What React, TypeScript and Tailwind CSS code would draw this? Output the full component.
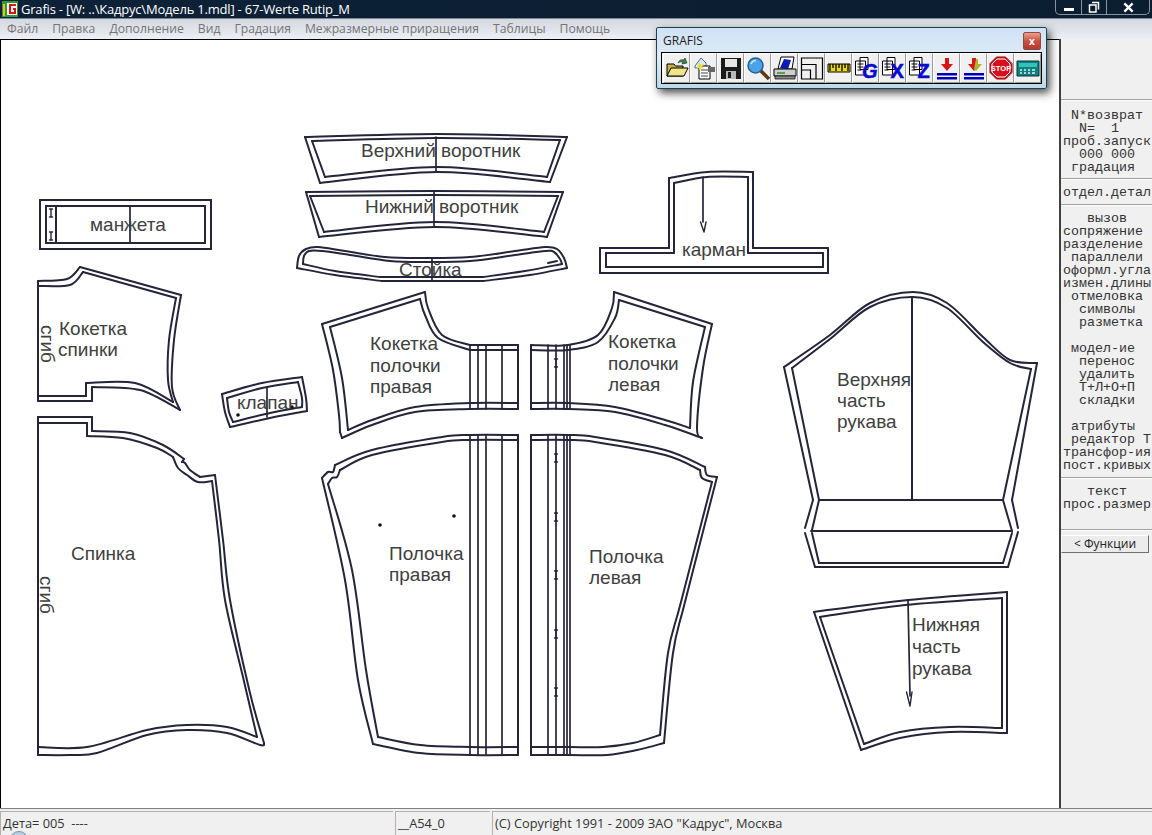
import type { ReactNode } from 'react';

// each piece is a list of smooth strokes: "x,y x,y x,y" in page coordinates
const heavy: string[] = [
  // верхний воротник
  '305,137 437,134 567,137', '567,137 550,182', '550,182 437,172 320,183', '320,183 305,137',
  '312,141 437,138 560,140', '560,140 547,177', '547,177 437,167 325,177', '325,177 312,141',
  // нижний воротник
  '306,192 435,191 563,192', '563,192 547,237', '547,237 435,227 319,237', '319,237 306,192',
  '310,196 435,195 558,196', '558,196 544,232', '544,232 435,222 324,232', '324,232 310,196',
  // стойка
  '297,268 299,256 306,249 318,247 345,251 385,257 423,258 470,257 515,251 545,247 557,249 564,258 567,268',
  '567,268 530,275 483,281', '483,281 382,281', '382,281 335,275 297,268',
  '303,264 304,256 309,251 322,251 350,255 390,261 425,262 470,261 515,255 545,251 554,252 560,259 562,264',
  '562,264 525,271 483,277', '483,277 380,277', '380,277 335,271 303,264',
  // манжета
  '40,200 211,200', '211,200 211,249', '211,249 40,249', '40,249 40,200',
  '46,206 205,206', '205,206 205,243', '205,243 46,243', '46,243 46,206',
  '56,206 56,243',
  // кокетка спинки
  '38,281 38,401',
  '38,281 67,279 80,267', '80,267 181,295', '181,295 174,340 172,387 180,410', '180,410 140,390 92,387',
  '92,387 92,401', '92,401 38,401',
  '38,286 70,285 83,272', '83,272 176,298', '176,298 169,340 168,380 173,402', '173,402 135,383 86,383',
  '86,383 86,396', '86,396 38,396',
  // клапан
  '222,394 262,383 302,377', '302,377 306,398 307,411', '307,411 270,418 230,427', '230,427 225,412 222,394',
  '227,398 262,388 298,382', '298,382 302,398 302,407', '302,407 270,413 233,422', '233,422 229,412 227,398',
  // спинка
  '38,417 38,755', '38,417 92,417', '92,417 92,431', '92,431 130,433 163,445 184,459', '184,459 182,462',
  '182,462 185,463 190,470 200,477', '200,477 215,475', '215,475 223,540 230,600 250,693 264,743', '264,743 260,745 227,733 187,730 147,735 97,753 70,755 38,755',
  '38,423 87,423', '87,423 87,436', '87,436 123,438 157,448 173,457', '173,457 178,468 187,475 198,482 212,481',
  '212,481 219,540 225,600 243,677 257,737', '257,737 227,727 187,725 147,730 87,747 38,747',
  // кокетка полочки правая
  '322,324 425,292', '425,292 428,308 442,335 470,345', '470,345 518,345', '518,345 518,409', '518,409 470,409 415,412 372,425 342,438',
  '342,438 340,432', '322,324 333,370 339,415 340,432',
  '330,327 420,299', '420,299 425,315 438,338 470,350', '470,350 518,350', '518,403 470,403 415,407 372,420 348,430', '348,430 342,378 330,327',
  // кокетка полочки левая
  '531,345 568,345 598,335 612,308 614,292', '614,292 712,324', '712,324 703,368 697,428 702,438', '702,438 665,425 615,412 568,409 531,409', '531,409 531,345',
  '531,350 568,350 598,342 615,318 619,300', '619,300 705,327', '705,327 693,382 690,428', '690,428 665,420 615,407 568,403 531,403',
  // полочка правая
  '518,435 470,435 442,437 372,450 335,465', '335,465 333,472 328,472 322,478', '322,478 345,580 358,680 373,744', '373,744 420,753 470,755 518,755', '518,755 518,435',
  '518,440 470,440 442,442 372,455 340,470', '340,470 337,477 332,478 328,484', '328,484 352,570 366,670 378,737', '378,737 420,745 470,747 518,747',
  // полочка левая
  '531,435 568,435 595,437 665,450 705,467', '705,467 707,475 717,477', '717,477 685,602 673,653 664,743', '664,743 637,750 607,755 569,755 531,755', '531,755 531,435',
  '531,440 568,440 595,442 665,455 700,470', '700,470 702,478 712,482', '712,482 681,602 668,653 660,735', '660,735 633,743 603,747 569,747 531,747',
  // верхняя часть рукава
  '784,367 830,335 870,303 913,292 947,303 983,337 1010,360 1037,363', '1037,363 1012,500', '1012,500 1018,528', '1018,532 1008,567', '1008,567 815,567',
  '815,567 805,533', '805,528 813,500', '813,500 784,367',
  '792,368 830,339 870,307 913,297 947,308 983,342 1010,363 1031,369', '1031,369 1003,500', '1003,500 819,500', '819,500 792,368',
  '819,500 812,530', '1003,500 1012,531', '811,531 1012,531', '812,533 819,563', '819,563 1003,563', '1003,563 1012,533', '912,297 912,500',
  // нижняя часть рукава
  '814,612 908,600 1007,592', '1007,592 1007,733', '1007,733 950,732 900,738 861,750', '861,750 814,612',
  '820,617 905,605 1002,598', '1002,598 1002,728', '1002,728 950,727 900,732 864,744', '864,744 820,617',
  // карман
  '669,178 707,172 753,172', '753,172 753,248', '753,248 828,248', '828,248 828,273', '828,273 600,273', '600,273 600,248', '600,248 669,248', '669,248 669,178',
  '674,183 707,177 748,177', '748,177 748,253', '748,253 823,253', '823,253 823,267', '823,267 606,267', '606,267 606,253', '606,253 674,253', '674,253 674,183',
];

const thin: string[] = [
  '436,137 436,172', '434,192 434,227', '432,258 432,281', '130,206 130,243', '267,387 267,417',
  '703,177 703,222', '908,600 910,696',
  ...[470, 478, 486, 502].flatMap((x) => [`${x},345 ${x},409`, `${x},435 ${x},755`]),
  ...[548, 556, 564, 567, 570].flatMap((x) => [`${x},345 ${x},409`, `${x},435 ${x},755`]),
];

const bars: [number, number][] = [[51, 213], [51, 236], [556, 363], [556, 458], [556, 517], [556, 575], [556, 634], [556, 692]];
const dots: [number, number][] = [[238, 415], [292, 407], [380, 525], [454, 516]];

const labels: [string, number, number][] = [
  ['Верхний воротник', 361, 157], ['Нижний воротник', 365, 213], ['Стойка', 399, 276], ['манжета', 90, 231],
  ['карман', 682, 256], ['Кокетка', 59, 335], ['спинки', 58, 356], ['клапан', 237, 409],
  ['Кокетка', 370, 350], ['полочки', 370, 372], ['правая', 370, 393],
  ['Кокетка', 608, 348], ['полочки', 608, 370], ['левая', 608, 391],
  ['Спинка', 71, 560], ['Полочка', 389, 560], ['правая', 389, 581], ['Полочка', 589, 563], ['левая', 589, 584],
  ['Верхняя', 837, 386], ['часть', 837, 407], ['рукава', 837, 428],
  ['Нижняя', 912, 631], ['часть', 912, 653], ['рукава', 912, 675],
];

const menu = ['Файл', 'Правка', 'Дополнение', 'Вид', 'Градация', 'Межразмерные приращения', 'Таблицы', 'Помощь'];

function smooth(line: string) {
  const p = line.split(' ').map((s) => s.split(',').map(Number));
  let d = `M${p[0][0]} ${p[0][1]}`;
  for (let i = 0; i < p.length - 1; i++) {
    const a = p[Math.max(i - 1, 0)];
    const b = p[i];
    const c = p[i + 1];
    const e = p[Math.min(i + 2, p.length - 1)];
    d += `C${b[0] + (c[0] - a[0]) / 6} ${b[1] + (c[1] - a[1]) / 6} ${c[0] - (e[0] - b[0]) / 6} ${c[1] - (e[1] - b[1]) / 6} ${c[0]} ${c[1]}`;
  }
  return d;
}

function PatternSheet() {
  return (
    <svg viewBox="1 40 1058 768" className="block h-full w-full font-['Liberation_Sans',sans-serif]">
      <g fill="none" stroke="#25253a" strokeLinecap="round" strokeLinejoin="round">
        {heavy.map((l, i) => <path key={i} d={smooth(l)} strokeWidth={2} />)}
        {thin.map((l, i) => <path key={i} d={smooth(l)} strokeWidth={1.7} />)}
        {bars.map(([x, y], i) => <path key={i} d={`M${x - 1.5} ${y - 4}h3M${x} ${y - 4}v8M${x - 1.5} ${y + 4}h3`} strokeWidth={1.4} />)}
        <path d="M700.5 222L704 232L706 222M906.5 692L910 706L912 692" strokeWidth={1.4} />
        <path d="M548 263L557 261" strokeWidth={2} />
      </g>
      {dots.map(([x, y], i) => <circle key={i} cx={x} cy={y} r={1.8} fill="#111" />)}
      <g fontSize={19} fill="#404040">
        {labels.map(([t, x, y], i) => <text key={i} x={x} y={y}>{t}</text>)}
        <text transform="translate(41 325) rotate(90)">сгиб</text>
        <text transform="translate(40 576) rotate(90)">сгиб</text>
      </g>
    </svg>
  );
}

function Docs() {
  return (
    <g fill="#fff" stroke="#000" strokeWidth={1}>
      <path d="M6 1.500h8v12H6zM1.500 5h10v14h-10z" />
      <path d="M3.500 8h6M3.500 11h6M3.500 14h4" fill="none" />
    </g>
  );
}

function BlueBars() {
  return <path d="M2 17h20v2.500H2zM2 21h20v2.500H2z" fill="#0000b8" />;
}

const icons: ReactNode[] = [
  <g key="open">
    <path d="M2 8h7l1.500 2H18v10H2z" fill="#c9b24a" stroke="#000" />
    <path d="M2 20l4-8h17l-4 8z" fill="#f1e58a" stroke="#000" />
    <path d="M13 7c1-3 4-4 6-3l1-2 2 5-5 1 1-2c-2-.5-4 0-5 1z" fill="#2f8f3a" stroke="#000" strokeWidth={0.5} />
  </g>,
  <g key="doc">
    <path d="M3 10L9 2l5 5v5H3z" fill="#dfe9f5" stroke="#3a6ea5" />
    <path d="M7 10h11v13H7z" fill="#fff" stroke="#000" />
    <path d="M9 14h7M9 17h7M9 20h7" stroke="#444" />
    <path d="M16 11h7v5h-7z" fill="#666" />
    <path d="M7 6l2 3 3-1-2 3 2 2-3-1-1 3-1-3-3 1 2-3z" fill="#e8d93a" />
  </g>,
  <g key="save">
    <path d="M2 2h20v21H2z" fill="#1b1b1b" />
    <path d="M6 3h12v8H6z" fill="#e6e6e6" />
    <path d="M7 15h10v8H7z" fill="#b9b9b9" />
    <path d="M9 16h3v6H9z" fill="#1b1b1b" />
  </g>,
  <g key="find">
    <path d="M14 14l9 9" stroke="#5a3a12" strokeWidth={3.500} />
    <circle cx={9.500} cy={9.500} r={7.500} fill="#4aa3e8" stroke="#27628f" strokeWidth={1.500} />
    <path d="M5 8c1-2.500 3-3.500 5-3.500" stroke="#cfeaff" fill="none" strokeWidth={1.500} />
  </g>,
  <g key="print">
    <path d="M8 1h13l-2 12H5z" fill="#fff" stroke="#000" />
    <path d="M11 3l7 1-3 9-8-1z" fill="#0b1bb5" />
    <path d="M1 13h22v7H1z" fill="#cfcfcf" stroke="#000" />
    <path d="M2 20h20v3H2z" fill="#8a8a8a" stroke="#000" strokeWidth={0.7} />
    <path d="M4 17h8" stroke="#2f8f3a" strokeWidth={1.500} />
  </g>,
  <g key="frames" fill="none" stroke="#000" strokeWidth={1.200}>
    <path d="M1.500 2h21v21h-21z" />
    <path d="M1.500 8.500h14.500V23M1.500 14h9v9" />
  </g>,
  <g key="ruler">
    <path d="M1 8h22v8H1z" fill="#e8d81a" stroke="#000" />
    <path d="M3 8v7M6 8v4M9 8v7M12 8v4M15 8v7M18 8v4M21 8v7" stroke="#000" strokeWidth={1.300} />
  </g>,
  ...['G', 'X', 'Z'].map((l) => (
    <g key={l}>
      <Docs />
      <text x={l === 'G' ? 8 : 9.500} y={22} fontSize={20} fontWeight={700} fontStyle={l === 'G' ? 'italic' : 'normal'} fontFamily="Liberation Sans" fill="#0a0ad0" stroke="#0a0ad0" strokeWidth={0.6}>{l}</text>
    </g>
  )),
  <g key="down">
    <path d="M10 2h4v6h4l-6 7-6-7h4z" fill="#d81414" />
    <BlueBars />
  </g>,
  <g key="down2">
    <path d="M10 2h4v6h4l-6 7-6-7h4z" fill="#d81414" />
    <path d="M14 3h2v5h4l-6 7-2-2z" fill="#a8b82a" />
    <BlueBars />
  </g>,
  <g key="stop">
    <path d="M7.500 1h9L23 7.500v9L16.500 23h-9L1 16.500v-9z" fill="#d8101c" stroke="#8a0a10" />
    <path d="M8 3h8l5 5v8l-5 5H8l-5-5V8z" fill="none" stroke="#fff" />
    <text x={12} y={15} textAnchor="middle" fontSize={7.500} fontWeight={700} fontFamily="Liberation Sans" fill="#fff">STOP</text>
  </g>,
  <g key="calc">
    <path d="M1 5h22v15H1z" fill="#0f7f80" stroke="#06393a" />
    <path d="M3 7h18v4H3z" fill="#35c3b8" />
    <path d="M4 14h2M8 14h2M12 14h2M16 14h3M4 17h2M8 17h2M12 17h2M16 17h3" stroke="#d8f5f0" strokeWidth={1.500} />
  </g>,
];

function ToolWindow() {
  return (
    <div className="absolute left-[656px] top-[27px] flex h-[62px] w-[391px] flex-col rounded-[2px] border border-[#21404f] bg-gradient-to-b from-[#cfe3f5] via-[#dfeaf5] to-[#bcd9ea] px-[4px] shadow-[3px_4px_9px_rgba(0,0,0,0.7)]">
      <div className="flex h-[24px] shrink-0 items-center justify-between pt-[2px]">
        <span className="pl-[2px] font-['Open_Sans',sans-serif] text-[12px] text-[#222]">GRAFIS</span>
        <div className="mr-[1px] flex h-[18px] w-[18px] items-center justify-center rounded-[2px] border border-[#8a4a40] bg-gradient-to-b from-[#e8a090] via-[#c9503f] to-[#b8382c] text-[10px] font-bold leading-none text-white">x</div>
      </div>
      <div className="flex h-[32px] shrink-0 items-stretch border border-black bg-[#f0f0f0] pl-[1px]">
        {icons.map((icon, i) => (
          <div key={i} className="flex w-[27px] shrink-0 items-center justify-center border border-t-white border-l-white border-r-[#9a9a9a] border-b-[#9a9a9a]">
            <svg viewBox="0 0 24 24" className="h-[24px] w-[24px] overflow-visible">{icon}</svg>
          </div>
        ))}
      </div>
    </div>
  );
}

function Side({ children }: { children: string }) {
  return <div className="h-[13px] whitespace-pre leading-[13px]">{children}</div>;
}

function Rule({ className }: { className: string }) {
  return <div className={`-ml-[2px] h-[2px] shrink-0 border-t border-[#a0a0a0] bg-white ${className}`} />;
}

export default function App() {
  return (
    <div className="relative flex h-[835px] w-[1152px] flex-col overflow-hidden bg-[#f0f0f0] font-['Open_Sans',sans-serif]">
      {/* title bar */}
      <div className="flex h-[19px] shrink-0 items-center justify-between border-b border-[#7b8794] bg-gradient-to-r from-[#0d2238] to-[#0b1d30] pl-[2px]">
        <div className="flex items-center gap-[3px]">
          <svg viewBox="0 0 16 16" className="h-[16px] w-[16px]">
            <path d="M0 0h16v16H0z" fill="#2f9a3a" />
            <path d="M5 2h10v12H5z" fill="#f4f4f4" />
            <path d="M7 3h7v2H9v6h3V9h-1V7h3v6H7z" fill="#d01818" />
            <path d="M1 3h2v12H1z" fill="#e8c020" />
          </svg>
          <span className="text-[13px] leading-[18px] tracking-[-0.2px] text-white">Grafis - [W: ..\Кадрус\Модель 1.mdl] - 67-Werte Rutip_M</span>
        </div>
        <div className="mr-[2px] -mt-[3px] flex h-[15px] items-center rounded-b-[5px] border border-t-0 border-[#8793a0]">
          <div className="flex h-full w-[26px] items-center justify-center border-r border-[#8793a0]">
            <div className="mt-[4px] h-[3px] w-[10px] bg-white" />
          </div>
          <div className="flex h-full w-[25px] items-center justify-center border-r border-[#8793a0]">
            <svg viewBox="0 0 12 12" className="h-[12px] w-[12px]">
              <path d="M4 1.500h6.500v7M1.500 4h6.500v7H1.500z" fill="none" stroke="#fff" strokeWidth={1.500} />
            </svg>
          </div>
          <div className="flex h-full w-[42px] items-center justify-center">
            <svg viewBox="0 0 12 12" className="h-[11px] w-[11px]">
              <path d="M1.500 1.500l9 9M10.500 1.500l-9 9" stroke="#fff" strokeWidth={2.500} />
            </svg>
          </div>
        </div>
      </div>

      {/* menu */}
      <div className="flex h-[20px] shrink-0 items-center gap-[14px] bg-gradient-to-b from-[#d4d9df] to-[#eceff5] pl-[7px] text-[12.200px] text-[#747474]">
        {menu.map((m) => <span key={m}>{m}</span>)}
      </div>

      <div className="flex min-h-0 flex-1">
        {/* drawing area */}
        <div className="min-w-0 flex-1 border-l border-t border-black bg-white">
          <PatternSheet />
        </div>

        {/* function panel */}
        <div className="flex w-[93px] shrink-0 flex-col border-l-2 border-[#404040] pl-[2px] font-['Liberation_Mono',monospace] text-[13.330px] text-[#333]">
          <Rule className="mb-[8px] mt-[60px]" />
          {[' N*возврат', '  N=  1', 'проб.запуск', '  000 000', ' градация'].map((s) => <Side key={s}>{s}</Side>)}
          <Rule className="mb-[6px] mt-[4px]" />
          <Side>отдел.детал</Side>
          <Rule className="mb-[6px] mt-[5px]" />
          {['   вызов', 'сопряжение', 'разделение', ' параллели', 'оформл.угла', 'измен.длины', ' отмеловка', '  символы', '  разметка', '', ' модел-ие', '  перенос', '  удалить', '  Т+Л+О+П', '  складки', '', ' атрибуты', ' редактор Т', 'трансфор-ия', 'пост.кривых'].map((s, i) => <Side key={i}>{s}</Side>)}
          <Rule className="mb-[6px] mt-[5px]" />
          <Side>{'   текст'}</Side>
          <Side>прос.размер</Side>
          <Rule className="mb-[4px] mt-[18px]" />
          <div className="-ml-[2px] flex h-[18px] w-[88px] items-center justify-center border border-t-white border-l-white border-r-[#707070] border-b-[#707070] bg-[#ececec] font-['Open_Sans',sans-serif] text-[12px] text-[#222]">
            &lt; Функции
          </div>
        </div>
      </div>

      {/* status bar */}
      <div className="flex h-[27px] shrink-0 items-stretch gap-[2px] border-t border-[#808080] pt-[2px] text-[12.800px] text-[#333]">
        <div className="flex w-[393px] items-center whitespace-pre border-l border-t border-[#b0b0b0] pl-[2px]">Дета= 005  ----</div>
        <div className="flex w-[95px] items-center border-l border-t border-[#b0b0b0] pl-[2px]">__A54_0</div>
        <div className="flex flex-1 items-center border-l border-t border-[#b0b0b0] pl-[2px]">(C) Copyright 1991 - 2009 ЗАО "Кадрус", Москва</div>
      </div>

      <ToolWindow />
      <div className="absolute left-[9px] top-[831px] h-[20px] w-[20px] rounded-full border border-[#7d92a8] bg-[#b9cfe2]" />
    </div>
  );
}
